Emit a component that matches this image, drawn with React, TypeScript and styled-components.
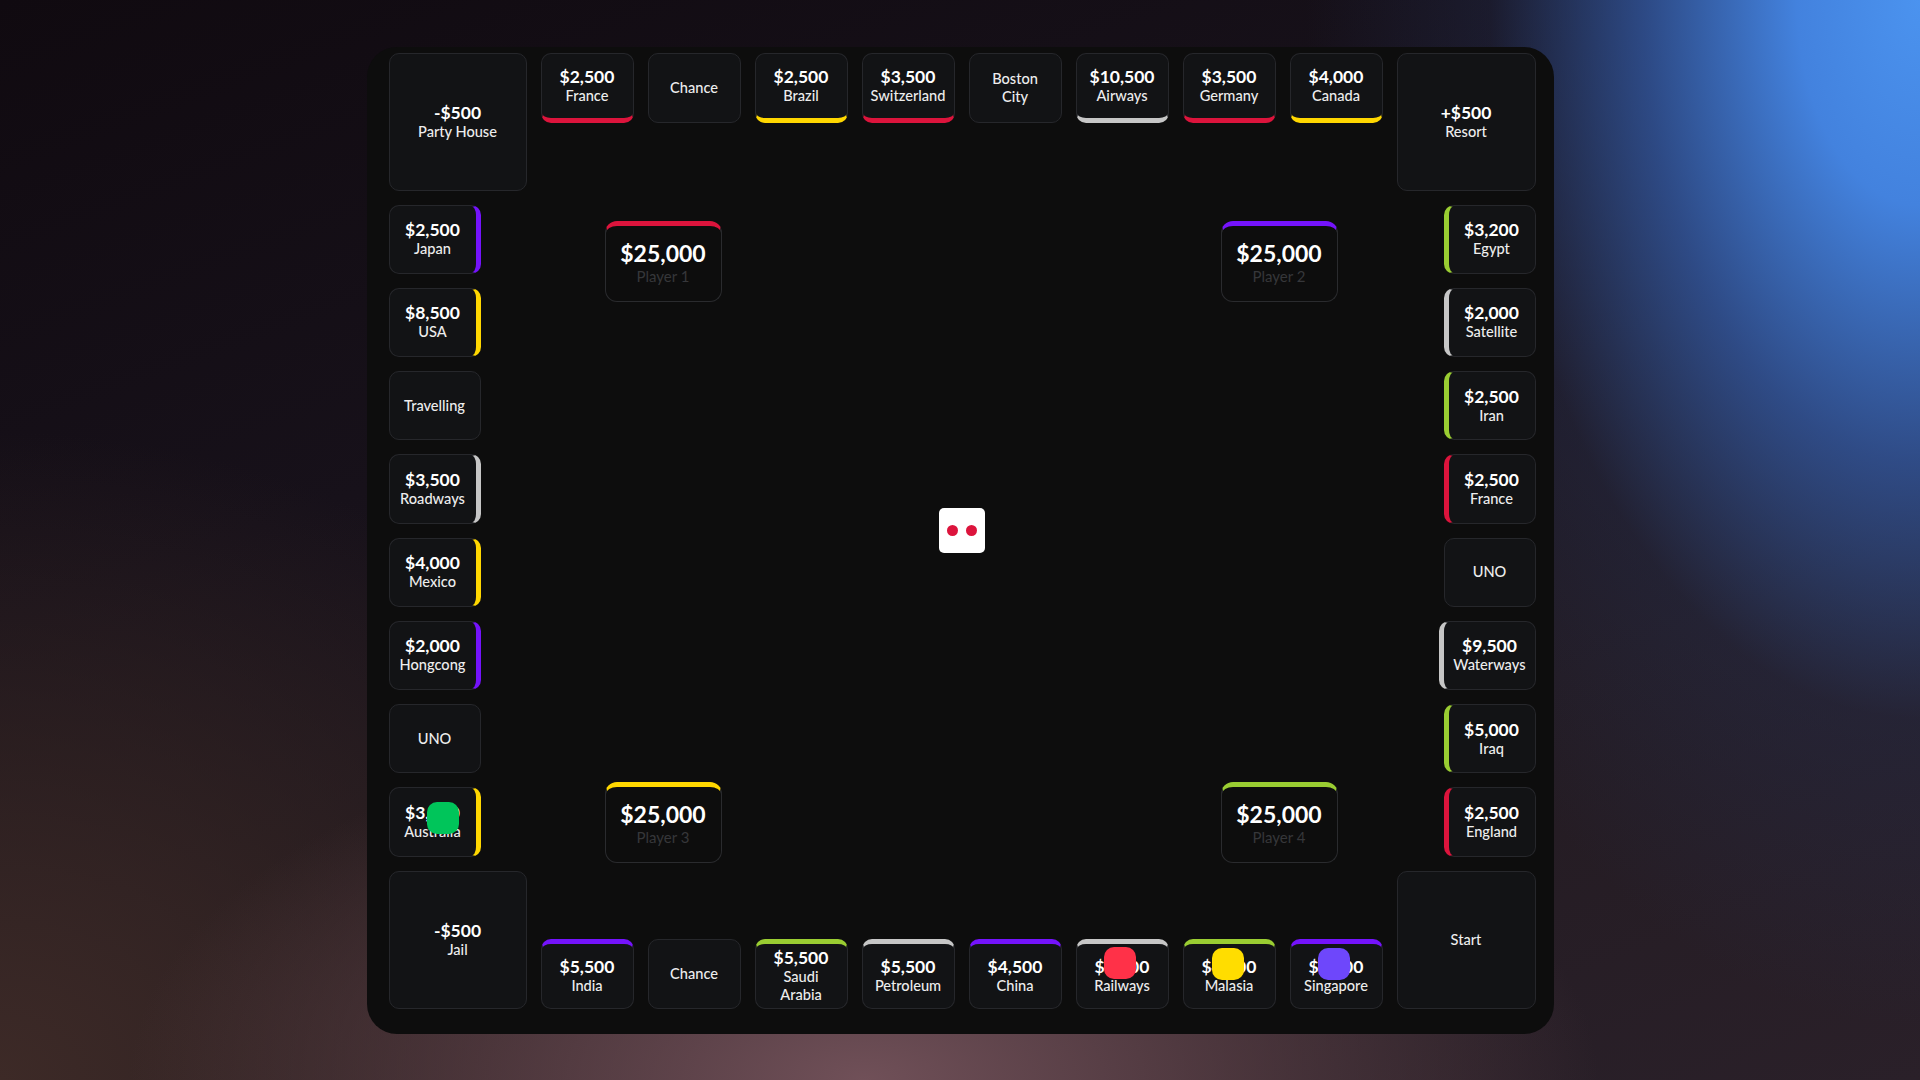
import React from 'react';
import styled, { createGlobalStyle, css } from 'styled-components';

const GlobalStyle = createGlobalStyle`
  html, body {
    margin: 0;
    padding: 0;
    height: 100%;
  }
  body {
    font-family: Lato, "Noto Sans", sans-serif;
    overflow: hidden;
    background:
      radial-gradient(ellipse 32% 95% at 100% 0%, #4b93ef 0%, #4382de 20%, rgba(52, 92, 168, 0.75) 45%, rgba(38, 52, 92, 0.3) 70%, rgba(35, 45, 80, 0) 100%),
      radial-gradient(ellipse 45% 40% at 45% 100%, rgba(112, 80, 88, 1) 0%, rgba(88, 62, 68, 0.7) 45%, rgba(60, 40, 45, 0) 85%),
      radial-gradient(ellipse 40% 60% at 0% 100%, #3d2a27 0%, rgba(55, 38, 35, 0.6) 50%, rgba(40, 28, 28, 0) 100%),
      linear-gradient(160deg, #100a10 0%, #17111a 35%, #231b22 70%, #2a2029 100%);
  }
  #root {
    height: 100%;
  }
`;

const COLORS = {
  red: '#dc143c',
  yellow: '#ffd700',
  purple: '#7413fb',
  silver: '#c6c6c6',
  green: '#9acd32',
};

type Side = 'top' | 'bottom' | 'left' | 'right';

const Page = styled.div`
  height: 100vh;
  display: flex;
  align-items: center;
  justify-content: center;
`;

const Board = styled.div`
  background: #0d0d0d;
  border-radius: 30px;
  padding: 6px 18px 25px 22px;
  display: grid;
  grid-template-columns: 138px repeat(8, 93px) 139px;
  grid-template-rows: 138px repeat(8, 69.25px) 138px;
  gap: 14px;
`;

const accentEdge: Record<Side, string> = {
  top: 'bottom',
  bottom: 'top',
  left: 'right',
  right: 'left',
};

const sideLayout: Record<Side, ReturnType<typeof css>> = {
  top: css`
    align-self: start;
    height: 70px;
    padding: 0 8px;
  `,
  bottom: css`
    align-self: end;
    height: 70px;
    padding: 0 8px;
  `,
  left: css`
    justify-self: start;
    min-width: 92px;
    padding: 0 9px;
  `,
  right: css`
    justify-self: end;
    min-width: 92px;
    padding: 0 9px;
  `,
};

const Tile = styled.div<{ $side: Side; $accent?: string; $row: number; $col: number }>`
  position: relative;
  box-sizing: border-box;
  grid-row: ${(p) => p.$row};
  grid-column: ${(p) => p.$col};
  background: #121315;
  border: 1px solid #26272b;
  border-radius: 10px;
  display: flex;
  flex-direction: column;
  align-items: center;
  justify-content: center;
  ${(p) => sideLayout[p.$side]}
  ${(p) =>
    p.$accent &&
    css`
      border-${accentEdge[p.$side]}: 5px solid ${p.$accent};
    `}
`;

const Corner = styled.div<{ $row: number; $col: number }>`
  box-sizing: border-box;
  grid-row: ${(p) => p.$row};
  grid-column: ${(p) => p.$col};
  background: #121315;
  border: 1px solid #26272b;
  border-radius: 10px;
  display: flex;
  flex-direction: column;
  align-items: center;
  justify-content: center;
`;

const Price = styled.div`
  font-size: 17.5px;
  font-weight: 700;
  line-height: 20px;
  color: #ffffff;
`;

const Name = styled.div`
  font-size: 14.6px;
  font-weight: 500;
  line-height: 18px;
  color: #ededed;
  white-space: pre;
  text-align: center;
`;

const Token = styled.div<{ $color: string; $x: number; $y: number }>`
  position: absolute;
  left: ${(p) => p.$x}px;
  top: ${(p) => p.$y}px;
  width: 32px;
  height: 32px;
  border-radius: 10px;
  background: ${(p) => p.$color};
  z-index: 2;
`;

const Center = styled.div`
  grid-row: 2 / 10;
  grid-column: 2 / 10;
  margin: 16px 45px -6px 64px;
  display: grid;
  grid-template-columns: 117px 1fr 117px;
  grid-template-rows: 81px 1fr 81px;
`;

const PlayerCard = styled.div<{ $color: string; $row: number; $col: number }>`
  box-sizing: border-box;
  grid-row: ${(p) => p.$row};
  grid-column: ${(p) => p.$col};
  background: #0d0d0d;
  border: 1px solid #2a2b2e;
  border-top: 5px solid ${(p) => p.$color};
  border-radius: 12px;
  display: flex;
  flex-direction: column;
  align-items: center;
  justify-content: center;
`;

const Money = styled.div`
  font-size: 23px;
  font-weight: 700;
  line-height: 26px;
  color: #ffffff;
`;

const PlayerLabel = styled.div`
  font-size: 15px;
  line-height: 20px;
  color: #36373a;
`;

const Dice = styled.div`
  grid-row: 1 / -1;
  grid-column: 1 / -1;
  place-self: center;
  width: 46px;
  height: 45px;
  background: #ffffff;
  border-radius: 5px;
  display: flex;
  align-items: center;
  justify-content: center;
  gap: 8px;
`;

const Dot = styled.span`
  width: 11px;
  height: 11px;
  border-radius: 50%;
  background: #dc143c;
`;

type Cell = {
  p?: string;
  n: string;
  c?: string;
  token?: { color: string; x: number; y: number };
};

const topRow: Cell[] = [
  { p: '$2,500', n: 'France', c: COLORS.red },
  { n: 'Chance' },
  { p: '$2,500', n: 'Brazil', c: COLORS.yellow },
  { p: '$3,500', n: 'Switzerland', c: COLORS.red },
  { n: 'Boston\nCity' },
  { p: '$10,500', n: 'Airways', c: COLORS.silver },
  { p: '$3,500', n: 'Germany', c: COLORS.red },
  { p: '$4,000', n: 'Canada', c: COLORS.yellow },
];

const leftCol: Cell[] = [
  { p: '$2,500', n: 'Japan', c: COLORS.purple },
  { p: '$8,500', n: 'USA', c: COLORS.yellow },
  { n: 'Travelling' },
  { p: '$3,500', n: 'Roadways', c: COLORS.silver },
  { p: '$4,000', n: 'Mexico', c: COLORS.yellow },
  { p: '$2,000', n: 'Hongcong', c: COLORS.purple },
  { n: 'UNO' },
  { p: '$3,500', n: 'Australia', c: COLORS.yellow, token: { color: '#00c55a', x: 37, y: 14 } },
];

const rightCol: Cell[] = [
  { p: '$3,200', n: 'Egypt', c: COLORS.green },
  { p: '$2,000', n: 'Satellite', c: COLORS.silver },
  { p: '$2,500', n: 'Iran', c: COLORS.green },
  { p: '$2,500', n: 'France', c: COLORS.red },
  { n: 'UNO' },
  { p: '$9,500', n: 'Waterways', c: COLORS.silver },
  { p: '$5,000', n: 'Iraq', c: COLORS.green },
  { p: '$2,500', n: 'England', c: COLORS.red },
];

const bottomRow: Cell[] = [
  { p: '$5,500', n: 'India', c: COLORS.purple },
  { n: 'Chance' },
  { p: '$5,500', n: 'Saudi\nArabia', c: COLORS.green },
  { p: '$5,500', n: 'Petroleum', c: COLORS.silver },
  { p: '$4,500', n: 'China', c: COLORS.purple },
  { p: '$3,500', n: 'Railways', c: COLORS.silver, token: { color: '#ff3148', x: 27, y: 3 } },
  { p: '$4,500', n: 'Malasia', c: COLORS.green, token: { color: '#ffdd00', x: 28, y: 4 } },
  { p: '$3,500', n: 'Singapore', c: COLORS.purple, token: { color: '#6e47fb', x: 27, y: 4 } },
];

const corners = [
  { row: 1, col: 1, p: '-$500', n: 'Party House' },
  { row: 1, col: 10, p: '+$500', n: 'Resort' },
  { row: 10, col: 1, p: '-$500', n: 'Jail' },
  { row: 10, col: 10, n: 'Start' },
];

const players = [
  { label: 'Player 1', color: COLORS.red, row: 1, col: 1 },
  { label: 'Player 2', color: COLORS.purple, row: 1, col: 3 },
  { label: 'Player 3', color: COLORS.yellow, row: 3, col: 1 },
  { label: 'Player 4', color: COLORS.green, row: 3, col: 3 },
];

function renderTile(cell: Cell, side: Side, row: number, col: number) {
  return (
    <Tile key={`${side}-${row}-${col}`} $side={side} $accent={cell.c} $row={row} $col={col}>
      {cell.p && <Price>{cell.p}</Price>}
      <Name>{cell.n}</Name>
      {cell.token && <Token $color={cell.token.color} $x={cell.token.x} $y={cell.token.y} />}
    </Tile>
  );
}

export default function App() {
  return (
    <>
      <GlobalStyle />
      <Page>
        <Board>
          {corners.map((c) => (
            <Corner key={`c-${c.row}-${c.col}`} $row={c.row} $col={c.col}>
              {c.p && <Price>{c.p}</Price>}
              <Name>{c.n}</Name>
            </Corner>
          ))}
          {topRow.map((cell, i) => renderTile(cell, 'top', 1, i + 2))}
          {leftCol.map((cell, i) => renderTile(cell, 'left', i + 2, 1))}
          {rightCol.map((cell, i) => renderTile(cell, 'right', i + 2, 10))}
          {bottomRow.map((cell, i) => renderTile(cell, 'bottom', 10, i + 2))}
          <Center>
            {players.map((pl) => (
              <PlayerCard key={pl.label} $color={pl.color} $row={pl.row} $col={pl.col}>
                <Money>$25,000</Money>
                <PlayerLabel>{pl.label}</PlayerLabel>
              </PlayerCard>
            ))}
          </Center>
          <Dice>
            <Dot />
            <Dot />
          </Dice>
        </Board>
      </Page>
    </>
  );
}
